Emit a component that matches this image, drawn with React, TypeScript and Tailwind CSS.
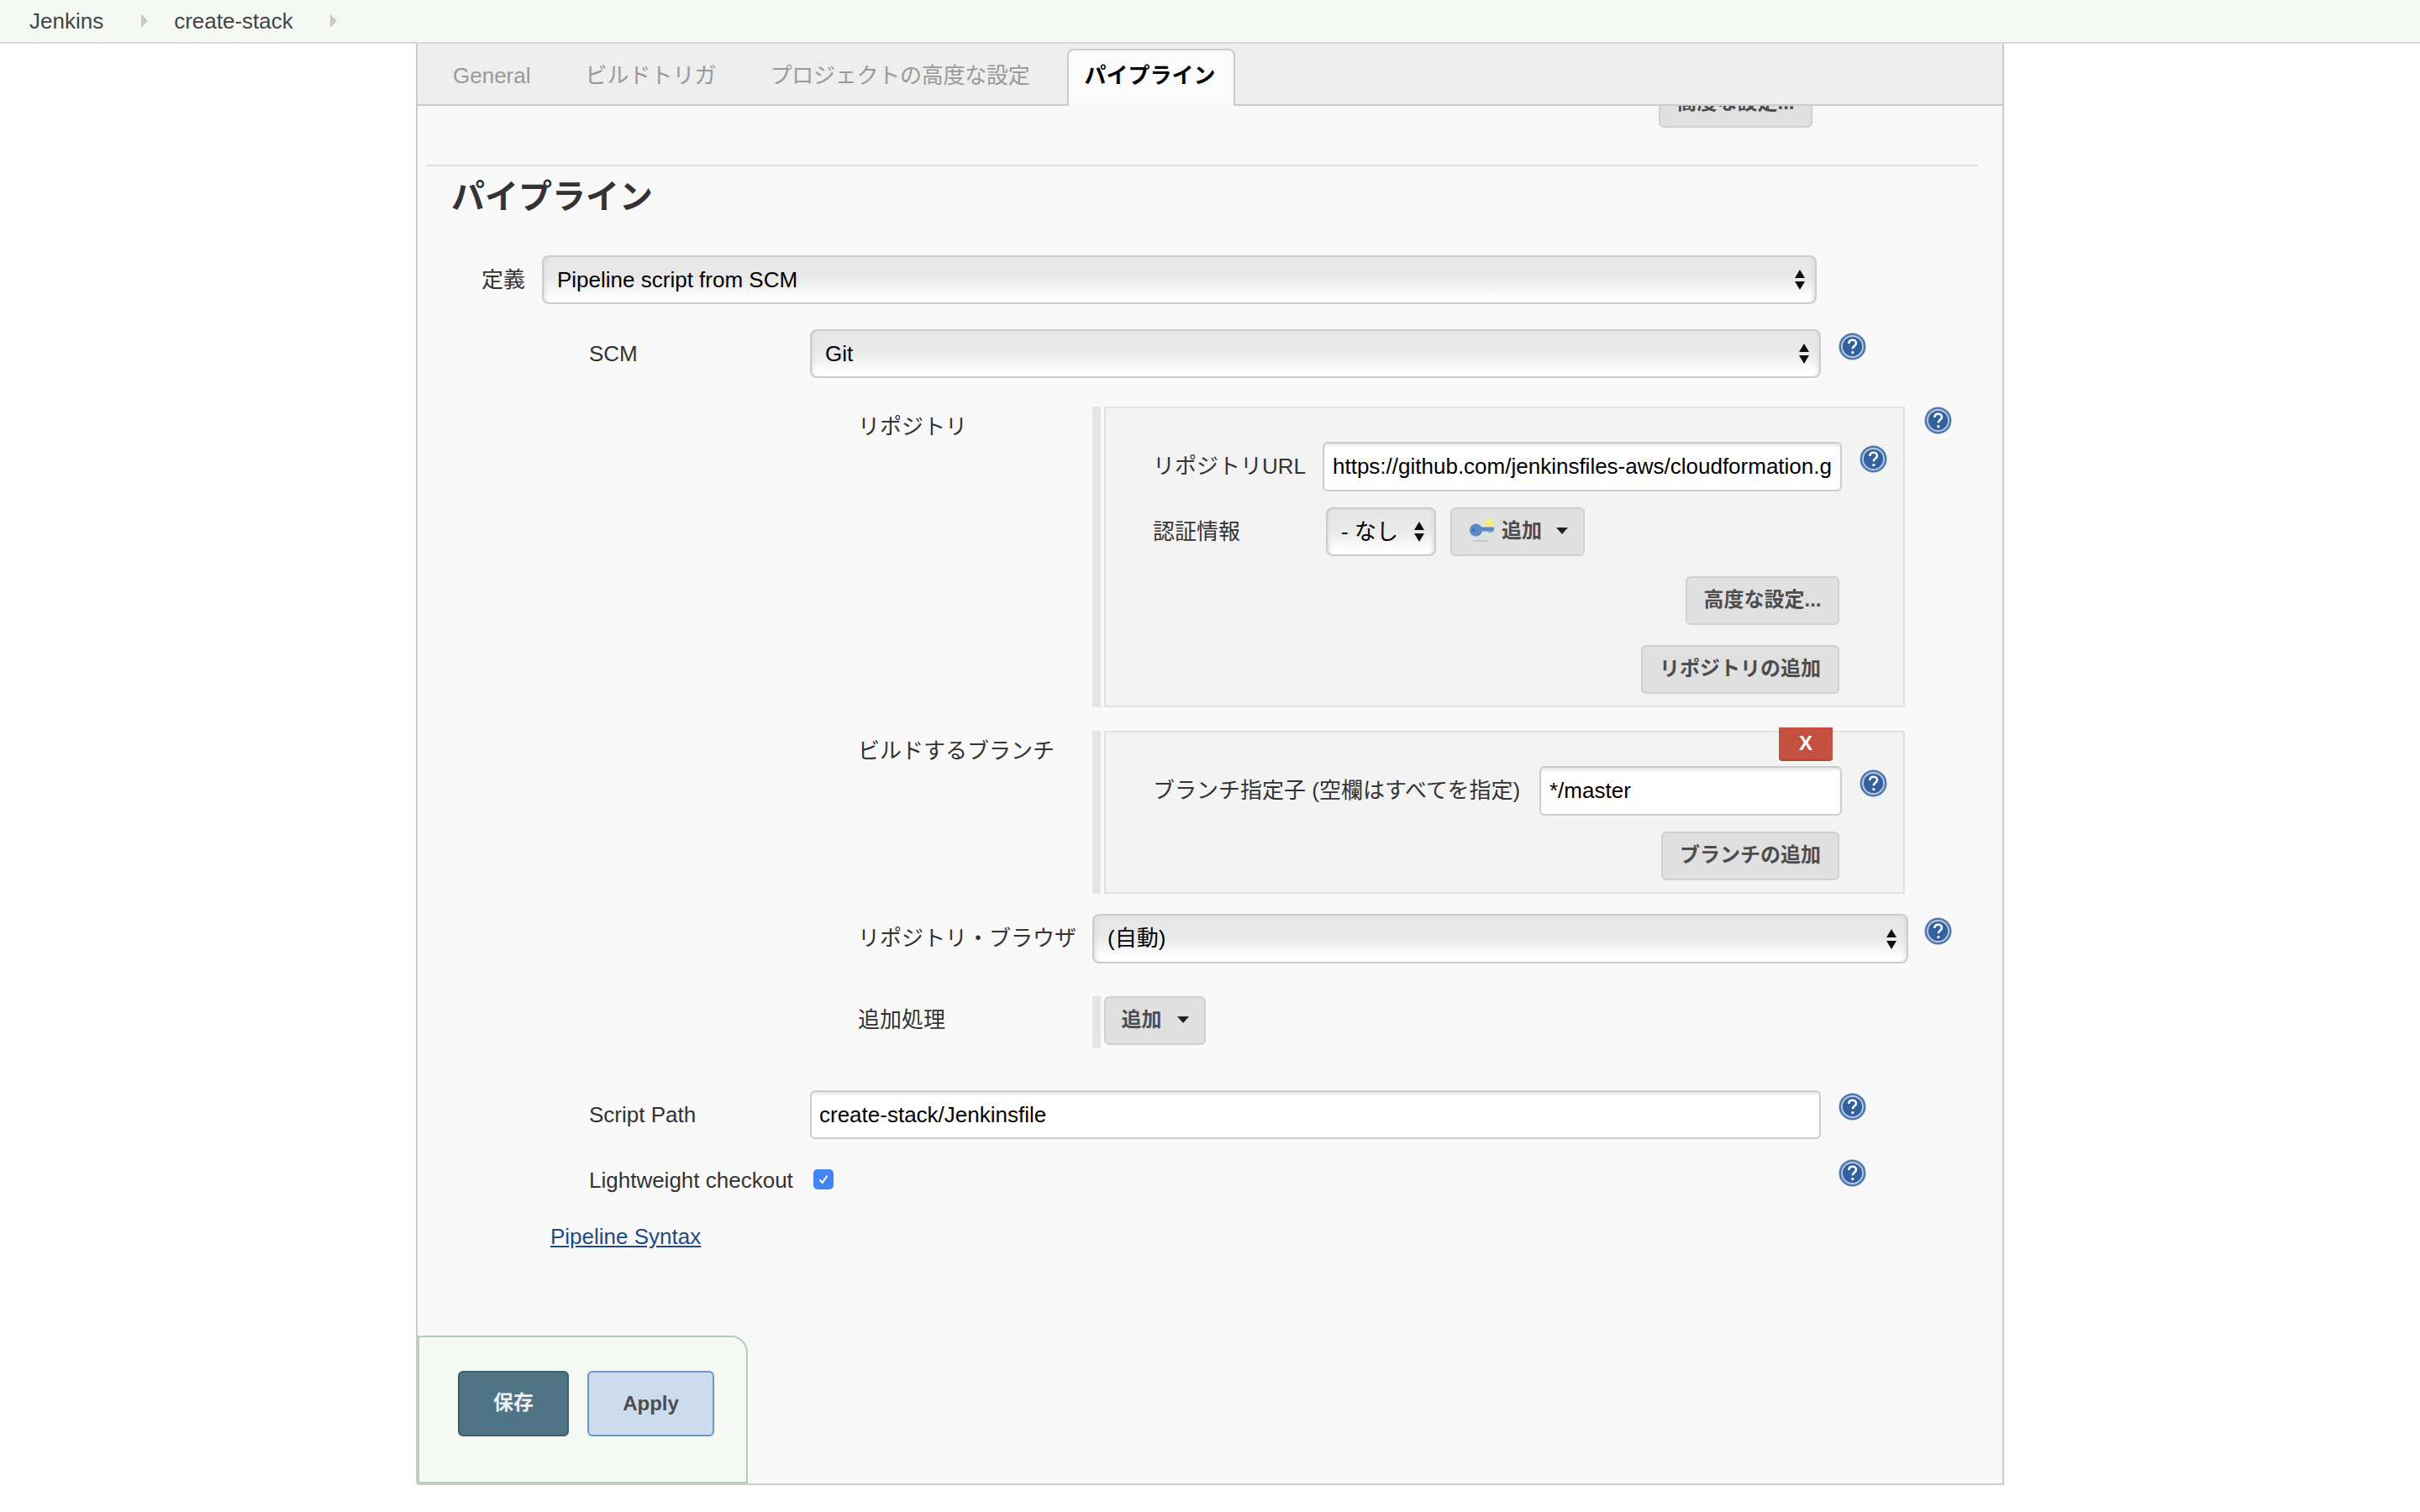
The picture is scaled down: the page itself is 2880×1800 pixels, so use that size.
import type { ReactNode } from 'react';

const selectClass =
  'appearance-none h-full w-full rounded-[8px] border-2 border-[#ccc] pl-[16px] text-[26px] text-black outline-none bg-[linear-gradient(#e6e6e6_0%,#e9e9e9_45%,#f5f5f5_72%,#ffffff_90%)] shadow-[inset_5px_0_5px_-4px_#d8d8d8,inset_-5px_0_5px_-4px_#d8d8d8]';
const inputClass =
  'rounded-[6px] border-2 border-[#ccc] bg-white text-[26px] text-black outline-none shadow-[inset_0_4px_4px_-2px_#e0e0e0]';
const buttonClass =
  'flex h-[58px] items-center justify-center rounded-[6px] border-2 border-[#d0d0d0] bg-[#e0e0e0] pb-[2px] text-[24px] font-bold text-[#4d4d4d]';

function HelpIcon({ className = '' }: { className?: string }) {
  return (
    <svg viewBox="0 0 33 33" className={`h-[33px] w-[33px] shrink-0 ${className}`}>
      <circle cx="16.5" cy="16.5" r="16" fill="#5079b0" />
      <circle cx="16.5" cy="16.5" r="13.4" fill="#bccbe0" />
      <circle cx="16.5" cy="16.5" r="11.6" fill="#33609f" />
      <path
        d="M12.2 13c.2-2.8 2-4.2 4.4-4.2 2.5 0 4.3 1.5 4.3 3.7 0 1.7-.9 2.6-2.2 3.5-1.3.9-1.9 1.6-1.9 3.2"
        fill="none"
        stroke="#fff"
        strokeWidth="2.6"
      />
      <circle cx="16.8" cy="23.6" r="1.7" fill="#fff" />
    </svg>
  );
}

function Arrows() {
  return (
    <svg viewBox="0 0 12 24" className="pointer-events-none absolute top-1/2 right-[14px] h-[24px] w-[12px] -translate-y-1/2">
      <path d="M6 0 12 10H0Z M0 14H12L6 24Z" fill="#111" />
    </svg>
  );
}

function Select({ value, className }: { value: string; className: string }) {
  return (
    <div className={`relative shrink-0 ${className}`}>
      <select className={selectClass} defaultValue={value}>
        <option>{value}</option>
      </select>
      <Arrows />
    </div>
  );
}

function Caret() {
  return (
    <svg viewBox="0 0 14 8" className="h-[8px] w-[14px]">
      <path d="M0 0H14L7 8Z" fill="#222" />
    </svg>
  );
}

function KeyIcon() {
  return (
    <svg viewBox="0 0 30 30" className="h-[30px] w-[30px]">
      <ellipse cx="13" cy="27" rx="11" ry="1.2" fill="#c8c8c8" />
      <circle cx="23.5" cy="5.5" r="5" fill="#f4ec78" />
      <circle cx="7.5" cy="14" r="7.5" fill="#5b88c8" />
      <rect x="12" y="10.5" width="17" height="5" fill="#5b88c8" />
      <rect x="22" y="15" width="5" height="2" fill="#7fa2d4" />
      <circle cx="4.5" cy="14" r="1.8" fill="#3f6aa6" />
    </svg>
  );
}

function Block({ children }: { children: ReactNode }) {
  return (
    <div className="flex">
      <div className="w-[10px] bg-[#e4e4e4]" />
      <div className="relative ml-[4px] w-[953px] border-2 border-[#e0e0e0] bg-[#f3f3f3] pl-[56px]">{children}</div>
    </div>
  );
}

export default function App() {
  return (
    <div className="h-[1800px] w-[2880px] overflow-hidden bg-white font-['Liberation_Sans','Noto_Sans_CJK_JP',sans-serif] text-[26px] text-[#333]">
      <div className="flex h-[52px] items-center border-b-2 border-[#d8dad4] bg-[#f6f9f3] pl-[35px] text-[#444]">
        <span>Jenkins</span>
        <svg viewBox="0 0 8 16" className="ml-[45px] h-[16px] w-[8px]">
          <path d="M0 0 8 8 0 16Z" fill="#c8c8c8" />
        </svg>
        <span className="ml-[31px]">create-stack</span>
        <svg viewBox="0 0 8 16" className="ml-[44px] h-[16px] w-[8px]">
          <path d="M0 0 8 8 0 16Z" fill="#c8c8c8" />
        </svg>
      </div>

      <div className="ml-[495px] flex h-[1716px] w-[1890px] flex-col rounded-bl-[4px] border-x-2 border-b-2 border-[#ccc] bg-[#f9f9f9]">
        <div className="relative z-10 flex h-[74px] shrink-0 items-start border-b-2 border-[#ccc] bg-[#eee] pl-[42px] text-[#999]">
          <span className="leading-[76px]">General</span>
          <span className="ml-[65px] leading-[76px]">ビルドトリガ</span>
          <span className="ml-[64px] leading-[76px] tracking-[-0.25px]">プロジェクトの高度な設定</span>
          <span className="mt-[6px] ml-[44px] h-[68px] rounded-t-[8px] border-x-2 border-t-2 border-[#ccc] bg-[#fbfbfb] pr-[21px] pl-[19px] leading-[60px] font-bold text-black">
            パイプライン
          </span>
        </div>

        <div className="flex min-h-0 flex-1 flex-col overflow-hidden">
          <div className="-mt-[32px] mr-[226px] flex justify-end">
            <div className={`${buttonClass} w-[183px]`}>高度な設定...</div>
          </div>
          <div className="mt-[44px] ml-[10px] h-[2px] w-[1846px] bg-[#ddd]" />
          <h2 className="mb-[34px] pl-[40px] text-[40px] leading-[72px] font-bold text-[#333]">パイプライン</h2>

          <div className="flex h-[58px] items-center pl-[76px]">
            <span className="w-[72px]">定義</span>
            <Select value="Pipeline script from SCM" className="h-[58px] w-[1517px]" />
          </div>

          <div className="mt-[30px] flex pl-[204px]">
            <span className="w-[263px] leading-[58px]">SCM</span>
            <Select value="Git" className="h-[58px] w-[1203px]" />
            <HelpIcon className="mt-[4px] ml-[21px]" />
          </div>

          <div className="mt-[34px] flex pl-[524px]">
            <span className="w-[279px] leading-[48px]">リポジトリ</span>
            <Block>
              <div className="flex pt-[40px]">
                <span className="w-[202px] leading-[59px]">リポジトリURL</span>
                <input className={`${inputClass} h-[59px] w-[618px] px-[10px]`} defaultValue="https://github.com/jenkinsfiles-aws/cloudformation.git" />
                <HelpIcon className="mt-[4px] ml-[21px]" />
              </div>
              <div className="mt-[19px] flex items-center">
                <span className="w-[206px]">認証情報</span>
                <Select value="- なし" className="h-[58px] w-[131px]" />
                <div className={`${buttonClass} ml-[17px] w-[160px] justify-start pl-[21px]`}>
                  <KeyIcon />
                  <span className="ml-[8px]">追加</span>
                  <span className="ml-[17px]">
                    <Caret />
                  </span>
                </div>
              </div>
              <div className="mt-[24px] flex justify-end pr-[76px]">
                <div className={`${buttonClass} w-[183px]`}>高度な設定...</div>
              </div>
              <div className="mt-[24px] flex justify-end pr-[76px] pb-[14px]">
                <div className={`${buttonClass} w-[236px]`}>リポジトリの追加</div>
              </div>
            </Block>
            <HelpIcon className="ml-[23px]" />
          </div>

          <div className="mt-[28px] flex pl-[524px]">
            <span className="w-[279px] leading-[48px]">ビルドするブランチ</span>
            <Block>
              <div className="absolute -top-[6px] right-[84px] flex h-[40px] w-[64px] items-center justify-center rounded-b-[4px] border-b-2 border-[#b04536] bg-[#c4503f] text-[24px] font-bold text-white">
                X
              </div>
              <div className="flex pt-[40px]">
                <span className="w-[460px] leading-[59px]">ブランチ指定子 (空欄はすべてを指定)</span>
                <input className={`${inputClass} h-[59px] w-[360px] px-[10px]`} defaultValue="*/master" />
                <HelpIcon className="mt-[4px] ml-[21px]" />
              </div>
              <div className="mt-[19px] flex justify-end pr-[76px] pb-[14px]">
                <div className={`${buttonClass} w-[212px]`}>ブランチの追加</div>
              </div>
            </Block>
          </div>

          <div className="mt-[24px] flex pl-[524px]">
            <span className="w-[279px] leading-[59px]">リポジトリ・ブラウザ</span>
            <Select value="(自動)" className="h-[59px] w-[971px]" />
            <HelpIcon className="mt-[4px] ml-[19px]" />
          </div>

          <div className="mt-[39px] flex pl-[524px]">
            <span className="w-[279px] leading-[56px]">追加処理</span>
            <div className="flex h-[62px]">
              <div className="w-[10px] bg-[#e4e4e4]" />
              <div className={`${buttonClass} ml-[4px] w-[121px] gap-[18px]`}>
                <span>追加</span>
                <Caret />
              </div>
            </div>
          </div>

          <div className="mt-[50px] flex pl-[204px]">
            <span className="w-[263px] leading-[58px]">Script Path</span>
            <input className={`${inputClass} h-[58px] w-[1203px] px-[9px]`} defaultValue="create-stack/Jenkinsfile" />
            <HelpIcon className="mt-[3px] ml-[21px]" />
          </div>

          <div className="mt-[24px] flex h-[50px] w-[1724px] items-start pl-[204px]">
            <span className="w-[264px] leading-[50px]">Lightweight checkout</span>
            <span className="mt-[12px] ml-[3px] flex h-[24px] w-[24px] items-center justify-center rounded-[5px] bg-[#4285f4]">
              <svg viewBox="0 0 16 16" className="h-[16px] w-[16px]">
                <path d="M3.5 8.5 6.8 12 12.5 3.5" fill="none" stroke="#fff" strokeWidth="2" />
              </svg>
            </span>
            <HelpIcon className="ml-auto" />
          </div>

          <a className="mt-[22px] ml-[158px] w-fit leading-[40px] text-[#204a87] underline">Pipeline Syntax</a>

          <div className="mt-auto flex h-[176px] w-[393px] shrink-0 gap-[22px] rounded-tr-[20px] border-2 border-[#b4cfb9] bg-[#f6f9f3] pt-[40px] pl-[46px] text-[24px] font-bold">
            <button className="h-[78px] w-[132px] rounded-[6px] border-2 border-[#3d5d6d] bg-[#4f7486] pb-[2px] text-[#eee]">保存</button>
            <button className="h-[78px] w-[151px] rounded-[6px] border-2 border-[#6d97c7] bg-[#cddcec] text-[#4d4d4d]">Apply</button>
          </div>
        </div>
      </div>
    </div>
  );
}
